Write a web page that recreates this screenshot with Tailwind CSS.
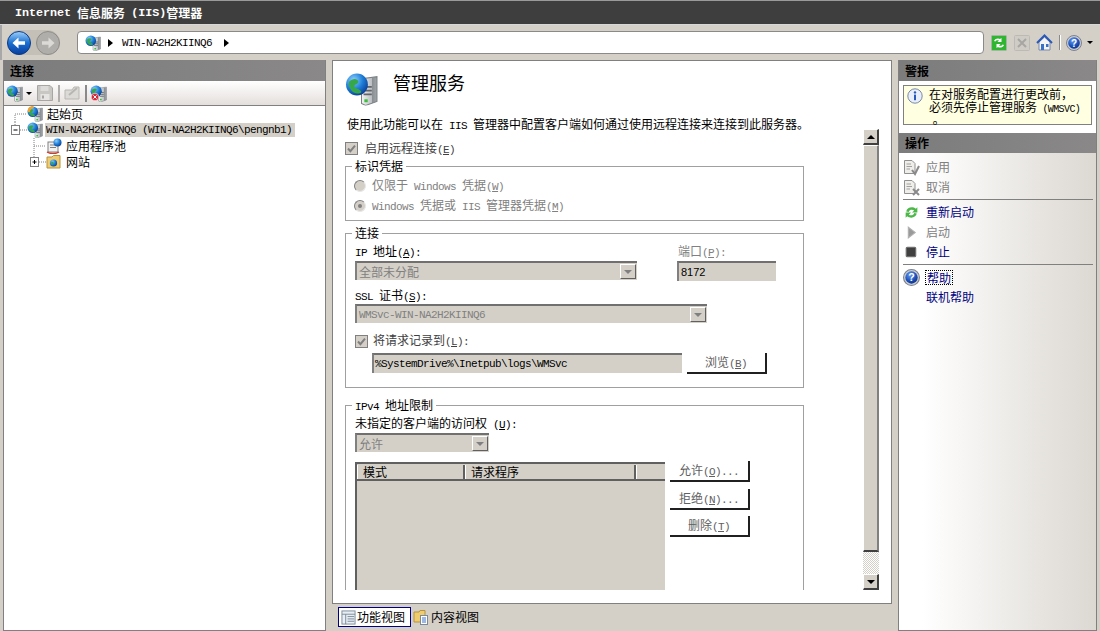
<!DOCTYPE html>
<html lang="zh-CN">
  <head>
    <meta charset="UTF-8" />
    <title>Internet 信息服务 (IIS)管理器</title>
    <script src="https://cdn.jsdelivr.net/npm/@tailwindcss/browser@4"></script>
  </head>
  <body class="w-[1100px] h-[631px] overflow-hidden flex flex-col bg-[#d4d0c8] text-[12px] leading-[14px] text-black font-['Noto_Sans_CJK_SC',sans-serif]">
    <!-- shared icons -->
    <svg width="0" height="0" class="absolute">
      <defs>
        <radialGradient id="globe" cx="35%" cy="30%" r="75%">
          <stop offset="0" stop-color="#8fd0ff" />
          <stop offset="0.55" stop-color="#1f7fd8" />
          <stop offset="1" stop-color="#0a3f96" />
        </radialGradient>
        <radialGradient id="blueball" cx="40%" cy="30%" r="80%">
          <stop offset="0" stop-color="#6a9cf0" />
          <stop offset="0.6" stop-color="#1b4fb8" />
          <stop offset="1" stop-color="#0b2a78" />
        </radialGradient>
        <linearGradient id="back" x1="0" y1="0" x2="0" y2="1">
          <stop offset="0" stop-color="#9fd0fb" />
          <stop offset="0.5" stop-color="#1a6fd0" />
          <stop offset="1" stop-color="#0a3d9c" />
        </linearGradient>
        <linearGradient id="srv" x1="0" y1="0" x2="1" y2="0">
          <stop offset="0" stop-color="#f4f4f4" />
          <stop offset="0.7" stop-color="#b8bcc0" />
          <stop offset="0.71" stop-color="#8a9094" />
          <stop offset="1" stop-color="#a0a6aa" />
        </linearGradient>
        <symbol id="server" viewBox="0 0 16 16">
          <path d="M8 3 L15.5 2 V14 L10 16 L8 15 Z" fill="url(#srv)" stroke="#7a8084" stroke-width="0.5" />
          <path d="M9 7H13M9 8.8H13M9 10.6H13" stroke="#60666a" stroke-width="0.8" />
          <rect x="9.4" y="13" width="1.6" height="1.4" fill="#38c038" />
          <circle cx="5.8" cy="5.8" r="5.3" fill="url(#globe)" />
          <path d="M2 4.5 C4 2.5 6 3 6.5 4.5 C6 6 4.5 5.5 4.5 7 C5.5 8 7.5 8 8 9.5 C6.5 11 4 10 3 8.5 C2 7 1.5 6 2 4.5Z" fill="#36a84a" />
        </symbol>
        <symbol id="help" viewBox="0 0 16 16">
          <circle cx="8" cy="8" r="7.5" fill="#c8ccd4" stroke="#7c828c" />
          <circle cx="8" cy="8" r="5.8" fill="url(#blueball)" />
          <text x="8" y="11.6" text-anchor="middle" font-size="10" font-weight="700" fill="#fff" font-family="Liberation Sans">?</text>
        </symbol>
        <symbol id="tick" viewBox="0 0 13 13">
          <rect x="0.5" y="0.5" width="12" height="12" fill="#d4d0c8" stroke="#808080" />
          <path d="M3 6.5 L5.4 9.2 L10 3.6" fill="none" stroke="#808080" stroke-width="2" />
        </symbol>
        <symbol id="doc" viewBox="0 0 16 16">
          <path d="M1.5 1.5H9L12 4.5V14.5H1.5Z" fill="#f0eeea" stroke="#909090" />
          <path d="M3.5 5H8M3.5 7.5H9M3.5 10H7" stroke="#a0a0a0" />
        </symbol>
      </defs>
    </svg>

    <!-- title bar -->
    <div class="h-[25px] shrink-0 flex items-center pl-[15px] bg-[#3e3e3e] border-t border-t-[#9a9a9a] border-b border-b-[#d8d8d8] text-white font-bold">
      <span class="font-['Liberation_Mono'] text-[11.7px]">Internet</span>
      <span class="ml-[6px]">信息服务</span>
      <span class="font-['Liberation_Mono'] text-[11.7px] ml-[6px]">(IIS)</span>
      <span>管理器</span>
    </div>

    <!-- nav bar -->
    <div class="h-[35px] shrink-0 flex items-center pl-[7px] border-l-2 border-l-[#a8a8a8]">
      <div class="flex items-center w-[53px] h-[25px] -ml-[2px] rounded-full bg-[#c4c0b8]">
        <svg width="24" height="24" viewBox="0 0 24 24">
          <circle cx="12" cy="12" r="11.5" fill="url(#back)" stroke="#0b3a88" />
          <path d="M18 10.2H11.5V6.5L5.5 12L11.5 17.5V13.8H18Z" fill="#fff" />
        </svg>
        <svg width="24" height="24" viewBox="0 0 24 24" class="ml-[5px]">
          <circle cx="12" cy="12" r="11.5" fill="#b0aeaa" stroke="#8e8c88" />
          <path d="M6 10.2H12.5V6.5L18.5 12L12.5 17.5V13.8H6Z" fill="#dcdad6" />
        </svg>
      </div>
      <div class="ml-[17px] w-[907px] h-[23px] flex items-center pl-[7px] rounded-[4px] bg-white border border-[#8a8a8a]">
        <svg width="16" height="16"><use href="#server" /></svg>
        <span class="ml-[7px] w-0 h-0 border-y-[4px] border-y-transparent border-l-[5px] border-l-black"></span>
        <span class="ml-[9px] font-['Liberation_Mono'] text-[11px] tracking-[-0.6px]">WIN-NA2H2KIINQ6</span>
        <span class="ml-[12px] w-0 h-0 border-y-[4px] border-y-transparent border-l-[5px] border-l-black"></span>
      </div>
      <div class="ml-[7px] flex items-center">
        <svg width="16" height="16" viewBox="0 0 16 16">
          <rect x="0.5" y="0.5" width="15" height="15" rx="1" fill="#2fb52f" stroke="#a0b8a0" />
          <path d="M3 6 C4 3 8 3 9 4 L10.5 3 V7 H6.5 L8 5.6 C7 5 5 5 4.5 6.5Z M13 10 C12 13 8 13 7 12 L5.5 13 V9 H9.5 L8 10.4 C9 11 11 11 11.5 9.5Z" fill="#fff" />
        </svg>
        <svg width="16" height="16" viewBox="0 0 16 16" class="ml-[7px]">
          <rect x="0.5" y="0.5" width="15" height="15" rx="1" fill="#cfccc6" stroke="#bcbab4" />
          <path d="M4 4L12 12M12 4L4 12" stroke="#a8a6a2" stroke-width="2" />
        </svg>
        <svg width="17" height="17" viewBox="0 0 17 17" class="ml-[6px]">
          <path d="M3 8V16H14V8L8.5 3Z" fill="#f4f4f4" stroke="#7a8aa8" />
          <path d="M1 9L8.5 1.5L16 9" fill="none" stroke="#2a58b8" stroke-width="2" />
          <rect x="5" y="10" width="3" height="6" fill="#3a70c8" />
          <rect x="10" y="10" width="2.5" height="3" fill="#3a70c8" />
        </svg>
        <div class="ml-[6px] w-[2px] h-[15px] bg-[#8a8a8a] border-r border-r-white"></div>
        <svg width="16" height="16" class="ml-[5px]"><use href="#help" /></svg>
        <span class="ml-[5px] w-0 h-0 border-x-[3px] border-x-transparent border-t-[3px] border-t-black"></span>
      </div>
    </div>

    <!-- main -->
    <div class="flex-1 flex min-h-0 pl-[3px]">
      <!-- connections -->
      <div class="w-[323px] flex flex-col bg-white border border-t-0 border-[#808080]">
        <div class="h-[21px] shrink-0 flex items-center pl-[6px] font-bold bg-gradient-to-r from-[#7c7c7c] to-[#8a8888]">连接</div>
        <div class="h-[25px] shrink-0 flex items-center pl-[2px] border-b border-b-[#808080] bg-gradient-to-b from-white to-[#e4dfdc]">
          <svg width="17" height="17"><use href="#server" /></svg>
          <span class="ml-[3px] w-0 h-0 border-x-[3px] border-x-transparent border-t-[3px] border-t-black"></span>
          <svg width="16" height="16" viewBox="0 0 16 16" class="ml-[5px]">
            <path d="M0.5 0.5H13L15.5 3V15.5H0.5Z" fill="#c9c7c4" stroke="#a8a6a4" />
            <rect x="3.5" y="1" width="8" height="5" fill="#dedcda" />
            <rect x="3.5" y="9" width="9" height="6" fill="#e6e4e2" />
            <rect x="5" y="10.5" width="2" height="3" fill="#a8a6a4" />
          </svg>
          <div class="ml-[5px] w-[2px] h-[17px] bg-[#b0aeac]"></div>
          <svg width="16" height="16" viewBox="0 0 16 16" class="ml-[4px]">
            <path d="M1 5H8L10 2H15V14H1Z" fill="#dcdad6" stroke="#b8b6b2" />
            <path d="M5 10L13 3" stroke="#b8b6b2" stroke-width="2" />
          </svg>
          <div class="ml-[5px] w-[2px] h-[17px] bg-[#8a8a8a]"></div>
          <svg width="17" height="17" viewBox="0 0 17 17" class="ml-[3px]">
            <use href="#server" width="17" height="17" />
            <circle cx="5" cy="12" r="3.8" fill="#d42a3c" stroke="#fff" stroke-width="0.6" />
            <path d="M3.4 10.4L6.6 13.6M6.6 10.4L3.4 13.6" stroke="#fff" />
          </svg>
        </div>
        <div class="-ml-[1px]">
          <div class="h-[16px] flex items-center">
            <svg width="24" height="16" class="shrink-0"><path d="M12 16V8H24" fill="none" stroke="#808080" stroke-dasharray="1 1" /></svg>
            <svg width="16" height="16" viewBox="0 0 16 16" class="shrink-0">
              <use href="#server" width="16" height="16" />
              <path d="M1 6C0 2 3 0 6 0L7 2C4 2 3 4 3 6Z" fill="#f0a030" />
            </svg>
            <span class="ml-[4px]">起始页</span>
          </div>
          <div class="h-[16px] flex items-center">
            <svg width="24" height="16" class="shrink-0">
              <path d="M17 8H24M12 0V3" fill="none" stroke="#808080" stroke-dasharray="1 1" />
              <rect x="8.5" y="3.5" width="8" height="9" fill="#fff" stroke="#808080" />
              <path d="M10.5 8H14.5" stroke="#000" />
            </svg>
            <svg width="16" height="16" class="shrink-0"><use href="#server" /></svg>
            <span class="ml-[2px] h-[14px] w-[250px] pl-[1px] leading-[15px] bg-[#d4d0c8] font-['Liberation_Mono'] text-[11px] tracking-[-0.6px] whitespace-nowrap">WIN-NA2H2KIINQ6 (WIN-NA2H2KIINQ6\pengnb1)</span>
          </div>
          <div class="h-[16px] flex items-center">
            <svg width="43" height="16" class="shrink-0"><path d="M31 0V16M31 8H43" fill="none" stroke="#808080" stroke-dasharray="1 1" /></svg>
            <svg width="16" height="16" viewBox="0 0 16 16" class="shrink-0">
              <rect x="2" y="4" width="10" height="10" fill="#f2f2f2" stroke="#808080" />
              <path d="M4 7H10M4 9.5H10" stroke="#808080" />
              <path d="M1 14C4 16 10 16 13 14" fill="none" stroke="#c84030" stroke-width="1.5" />
              <circle cx="11.5" cy="4.5" r="4" fill="url(#globe)" />
            </svg>
            <span class="ml-[4px]">应用程序池</span>
          </div>
          <div class="h-[16px] flex items-center">
            <svg width="43" height="16" class="shrink-0">
              <path d="M31 0V3M36 8H43" fill="none" stroke="#808080" stroke-dasharray="1 1" />
              <rect x="27.5" y="3.5" width="8" height="9" fill="#fff" stroke="#808080" />
              <path d="M29.5 8H33.5M31.5 6V10" stroke="#000" />
            </svg>
            <svg width="16" height="16" viewBox="0 0 16 16" class="shrink-0">
              <path d="M1 3H6L7.5 1.5H14V14H1Z" fill="#f0cc70" stroke="#b8923c" />
              <circle cx="7.5" cy="9" r="3.6" fill="url(#globe)" />
              <path d="M5 8C6.5 7 8 8 7.5 10L6 11Z" fill="#36a84a" />
            </svg>
            <span class="ml-[4px]">网站</span>
          </div>
        </div>
      </div>

      <!-- center -->
      <div class="ml-[6px] w-[560px] flex flex-col">
        <div class="h-[544px] shrink-0 bg-white border border-[#808080] pl-[12px]">
          <div class="flex pt-[11px]">
            <svg width="33" height="34" viewBox="0 0 16 16" class="shrink-0"><use href="#server" /></svg>
            <h1 class="ml-[15px] text-[18px] leading-[20px]">管理服务</h1>
          </div>
          <p class="mt-[10px] h-[13px] pl-[2px] text-[12px] leading-[15px] whitespace-nowrap">使用此功能可以在<span class="font-['Liberation_Mono'] text-[11px] tracking-[-0.6px] whitespace-pre"> IIS </span>管理器中配置客户端如何通过使用远程连接来连接到此服务器。</p>
          <div class="flex h-[461px]">
            <!-- scrolling form -->
            <div class="w-[518px] overflow-hidden">
              <div class="mt-[13px] h-[13px] flex items-center">
                <svg width="13" height="13" class="shrink-0"><use href="#tick" /></svg>
                <span class="ml-[7px] text-[#404040]">启用远程连接<span class="font-['Liberation_Mono'] text-[11px] tracking-[-0.6px]">(<u>E</u>)</span></span>
              </div>

              <fieldset class="mt-[4px] w-[459px] h-[62px] border border-[#a0a0a0]">
                <legend class="ml-[6px] px-[3px] h-[14px]">标识凭据</legend>
                <div class="mt-[6px] h-[14px] flex items-center pl-[8px] text-[#808080]">
                  <span class="w-[12px] h-[12px] rounded-full bg-[#d4d0c8] border border-[#808080] border-b-[#e8e8e8] border-r-[#e8e8e8]"></span>
                  <span class="ml-[6px]">仅限于<span class="font-['Liberation_Mono'] text-[11px] tracking-[-0.6px] whitespace-pre"> Windows </span>凭据<span class="font-['Liberation_Mono'] text-[11px] tracking-[-0.6px]">(<u>W</u>)</span></span>
                </div>
                <div class="mt-[6px] h-[14px] flex items-center pl-[8px] text-[#808080]">
                  <span class="w-[12px] h-[12px] rounded-full bg-[#d4d0c8] border border-[#808080] border-b-[#e8e8e8] border-r-[#e8e8e8] flex items-center justify-center"><span class="w-[4px] h-[4px] rounded-full bg-[#808080]"></span></span>
                  <span class="ml-[6px]"><span class="font-['Liberation_Mono'] text-[11px] tracking-[-0.6px] whitespace-pre">Windows </span>凭据或<span class="font-['Liberation_Mono'] text-[11px] tracking-[-0.6px] whitespace-pre"> IIS </span>管理器凭据<span class="font-['Liberation_Mono'] text-[11px] tracking-[-0.6px]">(<u>M</u>)</span></span>
                </div>
              </fieldset>

              <fieldset class="mt-[5px] w-[459px] h-[162px] border border-[#a0a0a0] pl-[9px]">
                <legend class="ml-[-3px] px-[3px] h-[14px]">连接</legend>
                <div class="flex mt-[4px]">
                  <div class="w-[322px]">
                    <div class="h-[14px]"><span class="font-['Liberation_Mono'] text-[11px] tracking-[-0.6px] whitespace-pre">IP </span>地址<span class="font-['Liberation_Mono'] text-[11px] tracking-[-0.6px]">(<u>A</u>):</span></div>
                    <div class="mt-[3px] w-[282px] h-[19px] flex items-center justify-between pl-[2px] pr-[1px] bg-[#d4d0c8] border-t-2 border-l-2 border-t-[#707070] border-l-[#808080] text-[#808080]">
                      <span>全部未分配</span>
                      <span class="w-[16px] h-[15px] flex items-center justify-center bg-[#d4d0c8] border border-t-white border-l-white border-b-[#606060] border-r-[#606060]"><span class="w-0 h-0 border-x-[4px] border-x-transparent border-t-[4px] border-t-[#808080]"></span></span>
                    </div>
                  </div>
                  <div>
                    <div class="h-[14px] pl-[1px] text-[#808080]">端口<span class="font-['Liberation_Mono'] text-[11px] tracking-[-0.6px]">(<u>P</u>):</span></div>
                    <div class="mt-[3px] w-[99px] h-[20px] flex items-center pl-[2px] bg-[#d4d0c8] border-t-2 border-l-2 border-t-[#707070] border-l-[#808080] font-['Liberation_Sans'] text-[11px]">8172</div>
                  </div>
                </div>
                <div class="mt-[7px] h-[14px]"><span class="font-['Liberation_Mono'] text-[11px] tracking-[-0.6px] whitespace-pre">SSL </span>证书<span class="font-['Liberation_Mono'] text-[11px] tracking-[-0.6px]">(<u>S</u>):</span></div>
                <div class="mt-[2px] w-[352px] h-[19px] flex items-center justify-between pl-[2px] pr-[1px] bg-[#d4d0c8] border-t-2 border-l-2 border-t-[#707070] border-l-[#808080] text-[#808080]">
                  <span class="font-['Liberation_Mono'] text-[11px] tracking-[-0.6px]">WMSvc-WIN-NA2H2KIINQ6</span>
                  <span class="w-[16px] h-[15px] flex items-center justify-center bg-[#d4d0c8] border border-t-white border-l-white border-b-[#606060] border-r-[#606060]"><span class="w-0 h-0 border-x-[4px] border-x-transparent border-t-[4px] border-t-[#808080]"></span></span>
                </div>
                <div class="mt-[11px] h-[14px] flex items-center text-[#404040]">
                  <svg width="13" height="13" class="shrink-0"><use href="#tick" /></svg>
                  <span class="ml-[5px]">将请求记录到<span class="font-['Liberation_Mono'] text-[11px] tracking-[-0.6px]">(<u>L</u>):</span></span>
                </div>
                <div class="mt-[5px] ml-[17px] flex">
                  <div class="w-[310px] h-[20px] flex items-center pl-[1px] bg-[#d4d0c8] border-t-2 border-l-2 border-t-[#707070] border-l-[#808080] font-['Liberation_Mono'] text-[11px] tracking-[-0.6px]">%SystemDrive%\Inetpub\logs\WMSvc</div>
                  <button class="ml-[5px] w-[80px] h-[21px] bg-white border-b-2 border-r-2 border-b-[#202020] border-r-[#202020] text-[#606060] text-[12px]">浏览<span class="font-['Liberation_Mono'] text-[11px] tracking-[-0.6px]">(<u>B</u>)</span></button>
                </div>
              </fieldset>

              <fieldset class="mt-[10px] w-[459px] h-[220px] border border-[#a0a0a0] pl-[9px]">
                <legend class="ml-[-3px] px-[3px] h-[14px]"><span class="font-['Liberation_Mono'] text-[11px] tracking-[-0.6px] whitespace-pre">IPv4 </span>地址限制</legend>
                <div class="mt-[4px] h-[14px]">未指定的客户端的访问权<span class="font-['Liberation_Mono'] text-[11px] tracking-[-0.6px] whitespace-pre"> (<u>U</u>):</span></div>
                <div class="mt-[3px] w-[134px] h-[19px] flex items-center justify-between pl-[2px] pr-[1px] bg-[#d4d0c8] border-t-2 border-l-2 border-t-[#707070] border-l-[#808080] text-[#808080]">
                  <span>允许</span>
                  <span class="w-[16px] h-[15px] flex items-center justify-center bg-[#d4d0c8] border border-t-white border-l-white border-b-[#606060] border-r-[#606060]"><span class="w-0 h-0 border-x-[4px] border-x-transparent border-t-[4px] border-t-[#808080]"></span></span>
                </div>
                <div class="mt-[10px] flex">
                  <div class="w-[310px] h-[140px] bg-[#d4d0c8] border-t-2 border-l-2 border-t-[#606060] border-l-[#606060]">
                    <div class="flex h-[17px] pt-[1px] border-b-2 border-b-[#606060]">
                      <div class="w-[108px] pl-[5px] border-r-2 border-r-[#606060] border-l border-l-white">模式</div>
                      <div class="w-[171px] pl-[5px] border-r-2 border-r-[#606060] border-l border-l-white">请求程序</div>
                      <div class="flex-1 border-l border-l-white"></div>
                    </div>
                  </div>
                  <div class="ml-[5px] -mt-[1px] w-[80px] flex flex-col text-[#606060]">
                    <button class="h-[21px] bg-white border-b-2 border-r-2 border-b-[#202020] border-r-[#202020] text-[12px]">允许<span class="font-['Liberation_Mono'] text-[11px] tracking-[-0.6px]">(<u>O</u>)...</span></button>
                    <button class="mt-[7px] h-[21px] bg-white border-b-2 border-r-2 border-b-[#202020] border-r-[#202020] text-[12px]">拒绝<span class="font-['Liberation_Mono'] text-[11px] tracking-[-0.6px]">(<u>N</u>)...</span></button>
                    <button class="mt-[6px] h-[21px] bg-white border-b-2 border-r-2 border-b-[#202020] border-r-[#202020] text-[12px]">删除<span class="font-['Liberation_Mono'] text-[11px] tracking-[-0.6px]">(<u>T</u>)</span></button>
                  </div>
                </div>
              </fieldset>
            </div>

            <!-- scrollbar -->
            <div class="w-[16px] flex flex-col">
              <div class="h-[16px] flex items-center justify-center bg-[#d4d0c8] border-t border-l border-t-white border-l-white border-b-2 border-r-2 border-b-[#404040] border-r-[#404040]"><span class="w-0 h-0 border-x-[4px] border-x-transparent border-b-[4px] border-b-black"></span></div>
              <div class="h-[407px] bg-[#d4d0c8] border-t border-l border-t-white border-l-white border-b-2 border-r-2 border-b-[#404040] border-r-[#808080]"></div>
              <div class="h-[22px] bg-[repeating-conic-gradient(#d4d0c8_0_25%,#fff_0_50%)] bg-[length:2px_2px]"></div>
              <div class="h-[16px] flex items-center justify-center bg-[#d4d0c8] border-t border-l border-t-white border-l-white border-b-2 border-r-2 border-b-[#404040] border-r-[#404040]"><span class="w-0 h-0 border-x-[4px] border-x-transparent border-t-[4px] border-t-black"></span></div>
            </div>
          </div>
        </div>
        <!-- view tabs -->
        <div class="flex items-center pt-[3px] pl-[6px]">
          <div class="h-[20px] w-[73px] flex items-center pl-[2px] bg-white border border-[#000080]">
            <svg width="15" height="15" viewBox="0 0 16 16" class="shrink-0">
              <rect x="1" y="1" width="14" height="14" fill="#e8eef4" stroke="#7a8a9a" />
              <path d="M1 4.5H15M5 4.5V15M7 7H14M7 9.5H14M7 12H14" stroke="#7a8a9a" />
            </svg>
            <span class="ml-[1px]">功能视图</span>
          </div>
          <svg width="16" height="16" viewBox="0 0 16 16" class="ml-[2px] shrink-0">
            <path d="M1 3H6L7 1.5H12V13H1Z" fill="#f0cc70" stroke="#b8923c" />
            <rect x="7.5" y="6.5" width="7" height="9" fill="#fff" stroke="#7a8a9a" />
            <path d="M9 9H13M9 11H13M9 13H13" stroke="#3a70c8" />
          </svg>
          <span class="ml-[2px]">内容视图</span>
        </div>
      </div>

      <!-- actions -->
      <div class="ml-[6px] w-[199px] flex flex-col border border-t-0 border-[#808080]">
        <div class="h-[21px] shrink-0 flex items-center pl-[6px] font-bold bg-gradient-to-r from-[#7c7c7c] to-[#8a8888]">警报</div>
        <div class="h-[52px] shrink-0 pt-[4px] px-[4px] bg-white">
          <div class="h-[40px] flex pl-[3px] pt-[2px] bg-[#ffffe1] border border-[#808080]">
            <svg width="16" height="16" viewBox="0 0 16 16" class="shrink-0">
              <circle cx="8" cy="8" r="7.2" fill="#e8eefa" stroke="#7c8aa8" />
              <circle cx="8" cy="4.4" r="1.2" fill="#2a58b8" />
              <rect x="7" y="6.6" width="2" height="5.6" fill="#2a58b8" />
            </svg>
            <p class="ml-[6px] -mt-[1px] text-[12px] leading-[13px]">在对服务配置进行更改前，<br />必须先停止管理服务<span class="font-['Liberation_Mono'] text-[10px] tracking-[-0.6px] whitespace-pre"> (WMSVC)</span><br /><span lang="zh-TW" class="font-['Noto_Sans_CJK_TC']">。</span></p>
          </div>
        </div>
        <div class="h-[20px] shrink-0 flex items-center pl-[6px] font-bold bg-gradient-to-r from-[#7c7c7c] to-[#8a8888]">操作</div>
        <div class="flex-1 pt-[4px] pl-[4px] bg-gradient-to-r from-white from-[12%] to-[#dcd8d2]">
          <div class="h-[20px] flex items-center text-[#808080]">
            <svg width="17" height="17" viewBox="0 0 17 17" class="shrink-0"><use href="#doc" width="16" height="16" /><path d="M9 11L12 15L16 7" fill="none" stroke="#8a8a8a" stroke-width="2" /></svg>
            <span class="ml-[6px]">应用</span>
          </div>
          <div class="h-[20px] flex items-center text-[#808080]">
            <svg width="17" height="17" viewBox="0 0 17 17" class="shrink-0"><use href="#doc" width="16" height="16" /><path d="M10 10L16 16M16 10L10 16" stroke="#8a8a8a" stroke-width="2" /></svg>
            <span class="ml-[6px]">取消</span>
          </div>
          <div class="mt-[2px] mr-[3px] border-t border-t-[#808080]"></div>
          <div class="mt-[2px] h-[20px] flex items-center text-[#000080]">
            <svg width="17" height="17" viewBox="0 0 16 16" class="shrink-0">
              <path d="M3 7C4 3 9 2 12 4.5L13.5 3V8H8.5L10.5 6C9 5 6 5 5.4 7.5Z" fill="#4cb848" />
              <path d="M13 9C12 13 7 14 4 11.5L2.5 13V8H7.5L5.5 10C7 11 10 11 10.6 8.5Z" fill="#4cb848" />
            </svg>
            <span class="ml-[6px]">重新启动</span>
          </div>
          <div class="h-[20px] flex items-center text-[#808080]">
            <svg width="17" height="17" viewBox="0 0 16 16" class="shrink-0"><path d="M5 3L11.5 8L5 13Z" fill="#9a9a9a" stroke="#b0b0b0" /></svg>
            <span class="ml-[6px]">启动</span>
          </div>
          <div class="h-[20px] flex items-center text-[#000080]">
            <svg width="17" height="17" viewBox="0 0 16 16" class="shrink-0"><rect x="3" y="3" width="9" height="9" rx="1" fill="#404040" stroke="#707070" /></svg>
            <span class="ml-[6px]">停止</span>
          </div>
          <div class="mt-[2px] mr-[3px] border-t border-t-[#808080]"></div>
          <div class="mt-[2px] h-[20px] flex items-center text-[#000080]">
            <svg width="17" height="17" class="shrink-0"><use href="#help" width="17" height="17" /></svg>
            <span class="ml-[5px] px-[1px] border border-dotted border-black leading-[13px]">帮助</span>
          </div>
          <div class="h-[20px] flex items-center pl-[23px] text-[#000080]">联机帮助</div>
        </div>
      </div>
    </div>
  </body>
</html>
